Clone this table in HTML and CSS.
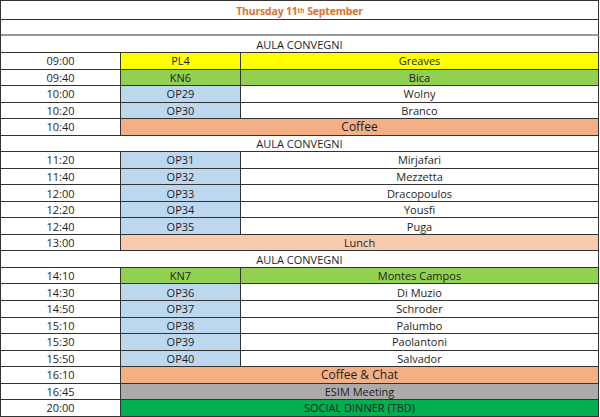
FILE: index.html
```html
<!DOCTYPE html>
<html>
<head>
<meta charset="utf-8">
<link rel="stylesheet" href="styles.css">
</head>
<body>
<div class="sheet">
  <div class="cell full title">Thursday 11<sup>th</sup> September</div>
  <div class="cell full empty"></div>
  <div class="cell full">AULA CONVEGNI</div>

  <div class="cell">09:00</div><div class="cell yellow">PL4</div><div class="cell yellow">Greaves</div>
  <div class="cell">09:40</div><div class="cell green">KN6</div><div class="cell green">Bica</div>
  <div class="cell">10:00</div><div class="cell blue">OP29</div><div class="cell">Wolny</div>
  <div class="cell">10:20</div><div class="cell blue">OP30</div><div class="cell">Branco</div>
  <div class="cell">10:40</div><div class="cell wide coffee">Coffee</div>
  <div class="cell full">AULA CONVEGNI</div>
  <div class="cell">11:20</div><div class="cell blue">OP31</div><div class="cell">Mirjafari</div>
  <div class="cell">11:40</div><div class="cell blue">OP32</div><div class="cell">Mezzetta</div>
  <div class="cell">12:00</div><div class="cell blue">OP33</div><div class="cell">Dracopoulos</div>
  <div class="cell">12:20</div><div class="cell blue">OP34</div><div class="cell">Yousfi</div>
  <div class="cell">12:40</div><div class="cell blue">OP35</div><div class="cell">Puga</div>
  <div class="cell">13:00</div><div class="cell wide lunch">Lunch</div>
  <div class="cell full">AULA CONVEGNI</div>
  <div class="cell">14:10</div><div class="cell green">KN7</div><div class="cell green">Montes Campos</div>
  <div class="cell">14:30</div><div class="cell blue">OP36</div><div class="cell">Di Muzio</div>
  <div class="cell">14:50</div><div class="cell blue">OP37</div><div class="cell">Schroder</div>
  <div class="cell">15:10</div><div class="cell blue">OP38</div><div class="cell">Palumbo</div>
  <div class="cell">15:30</div><div class="cell blue">OP39</div><div class="cell">Paolantoni</div>
  <div class="cell">15:50</div><div class="cell blue">OP40</div><div class="cell">Salvador</div>
  <div class="cell">16:10</div><div class="cell wide coffee">Coffee &amp; Chat</div>
  <div class="cell">16:45</div><div class="cell wide meeting">ESIM Meeting</div>
  <div class="cell">20:00</div><div class="cell wide dinner">SOCIAL DINNER (TBD)</div>
</div>
</body>
</html>
```
FILE: styles.css
```css
html, body {
  margin: 0;
  padding: 0;
  background: #ffffff;
}

.sheet {
  width: 599px;
  box-sizing: border-box;
  border-top: 1px solid #333333;
  border-left: 1px solid #333333;
  display: grid;
  grid-template-columns: 120px 120px 358px;
  grid-template-rows: 19px 16px 17px repeat(22, 16.545px);
  font-family: "Open Sans", "Liberation Sans", sans-serif;
  font-size: 11px;
  color: #1e1e1e;
}

.cell {
  box-sizing: border-box;
  border-right: 1px solid #333333;
  border-bottom: 1px solid #333333;
  display: flex;
  align-items: center;
  justify-content: center;
  line-height: 1;
  white-space: nowrap;
  overflow: hidden;
}

.full {
  grid-column: 1 / 4;
}

.wide {
  grid-column: 2 / 4;
}

.empty {
  border-bottom: 2px solid #999999;
}

.title {
  font-weight: bold;
  font-size: 10.5px;
  letter-spacing: -0.2px;
  color: #e2702c;
  padding-top: 2px;
}

.title sup {
  font-size: 6.5px;
  line-height: 0;
  vertical-align: 4px;
  margin-right: 3px;
}

.yellow { background: #ffff00; }
.green { background: #92d050; }
.blue { background: #bdd7ee; }
.coffee { background: #f4b084; font-size: 12px; }
.lunch { background: #f8cbad; }
.meeting { background: #aeaaaa; }
.dinner { background: #00b050; }
```
